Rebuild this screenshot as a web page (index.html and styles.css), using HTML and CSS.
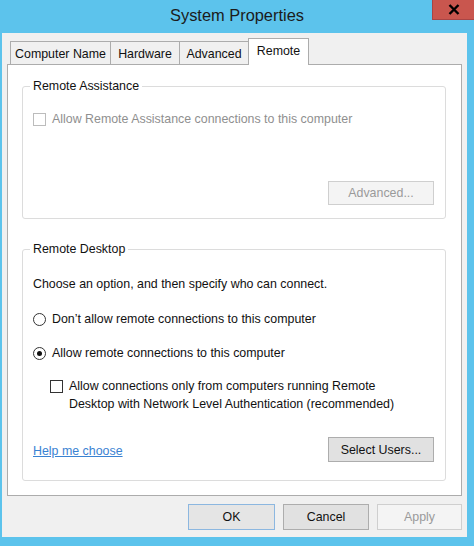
FILE: index.html
```html
<!DOCTYPE html>
<html lang="en">
<head>
<meta charset="utf-8">
<title>System Properties</title>
<link rel="stylesheet" href="styles.css">
</head>
<body>
<div class="window">
  <div class="titlebar">
    <span class="title">System Properties</span>
    <button class="close" type="button" aria-label="Close">
      <svg width="12" height="11" viewBox="0 0 12 11"><path d="M1.5 1 L10.5 10 M10.5 1 L1.5 10" stroke="#000" stroke-width="2.4" fill="none"/></svg>
    </button>
  </div>
  <div class="client">
    <div class="tabs">
      <div class="tab tab-name">Computer Name</div>
      <div class="tab tab-hw">Hardware</div>
      <div class="tab tab-adv">Advanced</div>
      <div class="tab tab-remote selected">Remote</div>
    </div>
    <div class="panel">
      <fieldset class="group group-assist">
        <legend>Remote Assistance</legend>
        <label class="check-row disabled">
          <span class="checkbox"></span>
          <span>Allow Remote Assistance connections to this computer</span>
        </label>
        <div class="group-actions">
          <button class="btn disabled" type="button">Advanced...</button>
        </div>
      </fieldset>
      <fieldset class="group group-desktop">
        <legend>Remote Desktop</legend>
        <p class="intro">Choose an option, and then specify who can connect.</p>
        <label class="radio-row">
          <span class="radio"></span>
          <span>Don’t allow remote connections to this computer</span>
        </label>
        <label class="radio-row second">
          <span class="radio checked"></span>
          <span>Allow remote connections to this computer</span>
        </label>
        <label class="check-row nla">
          <span class="checkbox"></span>
          <span>Allow connections only from computers running Remote<br>Desktop with Network Level Authentication (recommended)</span>
        </label>
        <div class="bottom-row">
          <a class="link" href="#">Help me choose</a>
          <button class="btn" type="button">Select Users...</button>
        </div>
      </fieldset>
    </div>
    <div class="dialog-buttons">
      <button class="btn default btn-ok" type="button">OK</button>
      <button class="btn btn-cancel" type="button">Cancel</button>
      <button class="btn disabled btn-apply" type="button">Apply</button>
    </div>
  </div>
</div>
</body>
</html>
```
FILE: styles.css
```css
* { box-sizing: border-box; }

html, body {
  margin: 0;
  padding: 0;
}

body {
  background: #5cc3ec;
  font-family: "Liberation Sans", Arial, sans-serif;
  font-size: 12.4px;
  color: #111;
}

.window {
  width: 474px;
  height: 546px;
  display: flex;
  flex-direction: column;
  overflow: hidden;
}

/* title bar */
.titlebar {
  height: 33px;
  display: grid;
  grid-template-columns: 1fr auto 1fr;
  flex-shrink: 0;
}

.title {
  grid-column: 2;
  align-self: center;
  font-size: 16.4px;
  color: #1b1b1b;
  margin-top: -3px;
}

.close {
  grid-column: 3;
  justify-self: end;
  align-self: start;
  width: 44px;
  height: 20px;
  margin-right: -2px;
  border: 1px solid #a84545;
  border-top: 0;
  background: #c9564e;
  padding: 0;
  display: flex;
  align-items: center;
  justify-content: center;
}

/* client area */
.client {
  flex: 1;
  margin: 0 7px 9px 2px;
  background: #f0f0f0;
  padding: 5px 5px 0;
  display: flex;
  flex-direction: column;
}

.tabs {
  display: flex;
  align-items: flex-end;
  padding-left: 3px;
}

.tab {
  height: 23px;
  border: 1px solid #acacac;
  border-bottom: 0;
  background: #f0f0f0;
  display: flex;
  align-items: center;
  justify-content: center;
  margin-left: -1px;
  color: #111;
  padding-top: 1px;
}

.tab:first-child { margin-left: 0; }

.tab-name { width: 101px; }
.tab-hw { width: 70px; }
.tab-adv { width: 70px; }
.tab-remote { width: 61px; }

.tab.selected {
  height: 27px;
  margin-bottom: -1px;
  background: #fff;
  position: relative;
  z-index: 1;
  padding-top: 0;
  padding-bottom: 3px;
}

.panel {
  height: 432px;
  background: #fff;
  border: 1px solid #acacac;
  padding: 13px 15px 0 14px;
}

/* group boxes */
.group {
  margin: 0;
  border: 1px solid #dcdcdc;
  border-radius: 3px;
  padding: 0 11px 0 10px;
  min-width: 0;
}

.group legend {
  padding: 0 3px;
  margin-left: -3px;
  line-height: 16px;
}

.group-assist {
  padding-top: 16px;
  padding-bottom: 13px;
}

.group-desktop {
  margin-top: 22px;
  padding-top: 18px;
  padding-bottom: 18px;
}

.check-row,
.radio-row {
  display: flex;
  align-items: center;
  gap: 6px;
  line-height: 18px;
}

.check-row.disabled { color: #8f8f8f; }

.checkbox {
  width: 13px;
  height: 13px;
  border: 1px solid #333;
  background: #fff;
  flex-shrink: 0;
}

.check-row.disabled .checkbox { border-color: #bcbcbc; }

.radio {
  width: 13px;
  height: 13px;
  border: 1px solid #333;
  border-radius: 50%;
  background: #fff;
  flex-shrink: 0;
  display: flex;
  align-items: center;
  justify-content: center;
}

.radio.checked::after {
  content: "";
  width: 5px;
  height: 5px;
  border-radius: 50%;
  background: #111;
}

.group-actions {
  display: flex;
  justify-content: flex-end;
  margin-top: 53px;
}

.intro {
  margin: 0;
  line-height: 18px;
}

.radio-row { margin-top: 17px; }
.radio-row.second { margin-top: 16px; }

.nla {
  margin-top: 15px;
  margin-left: 17px;
  align-items: flex-start;
}

.nla .checkbox { margin-top: 3px; }

.bottom-row {
  margin-top: 24px;
  display: flex;
  justify-content: space-between;
  align-items: center;
}

.link {
  color: #3a82d2;
  text-decoration: underline;
  padding-top: 2px;
}

/* push buttons */
.btn {
  font: inherit;
  color: #111;
  height: 25px;
  width: 106px;
  background: #e1e1e1;
  border: 1px solid #adadad;
  padding: 0;
}

.btn.disabled {
  color: #9a9a9a;
  background: #f4f4f4;
  border-color: #cfcfcf;
}

.group-assist .btn { height: 24px; }

.dialog-buttons {
  display: flex;
  justify-content: flex-end;
  gap: 8px;
  margin-top: 8px;
  padding-right: 0;
}

.dialog-buttons .btn { height: 26px; }
.btn-ok { width: 87px; }
.btn-cancel { width: 86px; }
.btn-apply { width: 85px; }

.btn.default {
  border-color: #8cb7e0;
  background: #e5e5e5;
}
```
